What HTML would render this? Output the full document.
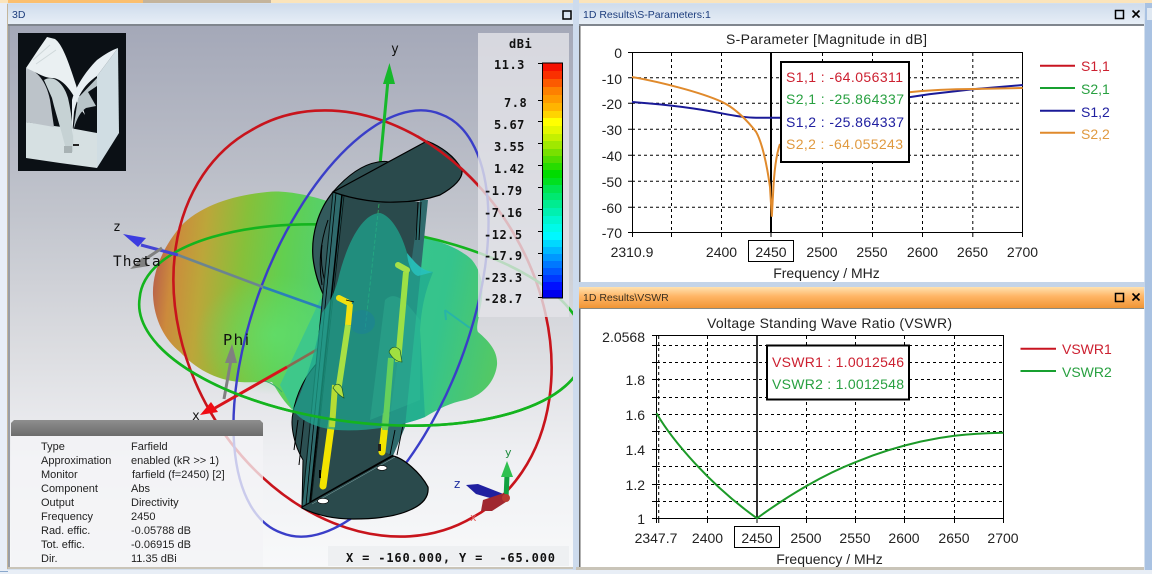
<!DOCTYPE html>
<html><head><meta charset="utf-8"><title>CST results</title>
<style>
html,body{margin:0;padding:0;width:1152px;height:574px;overflow:hidden;background:#d4e0ee}
svg{display:block;position:absolute;left:0;top:0;overflow:hidden}
text{font-family:"Liberation Sans",sans-serif;fill:#222}
.ax{font-size:14px}
.cb{font-family:"DejaVu Sans Mono","Liberation Mono",monospace;font-size:12px;font-weight:bold;letter-spacing:.5px;fill:#111}
.inf{font-size:11px;fill:#222}
.h{font-size:10.5px;fill:#1d3d7d}
.grid{stroke:#000;stroke-width:1;stroke-dasharray:3 3;fill:none}
.frame{stroke:#000;stroke-width:1;fill:none}
</style></head><body>
<svg width="1152" height="574" viewBox="0 0 1152 574" xmlns="http://www.w3.org/2000/svg">
<defs>
<linearGradient id="bg3d" x1="0" y1="0" x2="0" y2="1"><stop offset="0" stop-color="#a4a8b8"/><stop offset=".35" stop-color="#c2c5cd"/><stop offset=".6" stop-color="#dcdde1"/><stop offset=".8" stop-color="#eff0f3"/><stop offset="1" stop-color="#f8f9fa"/></linearGradient>
<linearGradient id="hb" x1="0" y1="0" x2="0" y2="1"><stop offset="0" stop-color="#cfdcec"/><stop offset="1" stop-color="#e8eff7"/></linearGradient>
<linearGradient id="ho" x1="0" y1="0" x2="0" y2="1"><stop offset="0" stop-color="#ffe2b0"/><stop offset=".45" stop-color="#ffb565"/><stop offset="1" stop-color="#f09535"/></linearGradient>
<linearGradient id="lobe" gradientUnits="userSpaceOnUse" x1="153" y1="270" x2="335" y2="290"><stop offset="0" stop-color="#b8604a"/><stop offset=".1" stop-color="#cc8a3c"/><stop offset=".26" stop-color="#bca63a"/><stop offset=".48" stop-color="#86c03a"/><stop offset=".7" stop-color="#62cf50"/><stop offset="1" stop-color="#4fd078"/></linearGradient>
<linearGradient id="lobe2" gradientUnits="userSpaceOnUse" x1="300" y1="300" x2="497" y2="340"><stop offset="0" stop-color="#3fc88a"/><stop offset=".7" stop-color="#35c48c"/><stop offset="1" stop-color="#52c866"/></linearGradient>
<radialGradient id="hi"><stop offset="0" stop-color="#60e070" stop-opacity=".7"/><stop offset="1" stop-color="#60e070" stop-opacity="0"/></radialGradient>
<linearGradient id="gh" x1="0" y1="0" x2="0" y2="1"><stop offset="0" stop-color="#8e8e8e"/><stop offset="1" stop-color="#6c6c6c"/></linearGradient>
<clipPath id="c3"><rect x="10" y="26" width="563" height="541"/></clipPath>
<clipPath id="cFront"><rect x="130" y="345" width="445" height="90"/></clipPath>
<clipPath id="cRed"><rect x="418" y="130" width="62" height="70"/></clipPath>
</defs>

<!-- frame -->
<rect width="1152" height="574" fill="#d4e0ee"/>
<rect x="0" y="0" width="7" height="574" fill="#e8eef7"/>
<rect x="7" y="4" width="1" height="565" fill="#c4b69c"/>
<rect x="1145" y="0" width="7" height="574" fill="#a9c2e2"/>
<rect x="0" y="0" width="1152" height="3" fill="#fbe4bb"/>
<rect x="8" y="0" width="135" height="3" fill="#fbbf6f"/>
<rect x="143" y="0" width="128" height="3" fill="#c4b49c"/>
<rect x="0" y="570" width="1152" height="4" fill="#e8eef6"/>
<rect x="0" y="571" width="8" height="1" fill="#8aa8cc"/>

<!-- 3D panel -->
<rect x="8" y="4" width="565" height="21" fill="url(#hb)"/>
<rect x="8" y="24" width="565" height="2" fill="#80868e"/>
<rect x="8" y="26" width="2" height="542" fill="#9a9ea6"/>
<text x="12" y="18" class="h">3D</text>
<rect x="563" y="11" width="8" height="8" fill="none" stroke="#000" stroke-width="1.5"/>
<rect x="10" y="26" width="563" height="541" fill="url(#bg3d)"/>

<g clip-path="url(#c3)">
<!-- thumbnail -->
<rect x="18" y="33" width="108" height="138" fill="#0b1015"/>
<path d="M26,122 L54,126 L70,128 L86,131 L97,133 L97,168 L60,163 L26,158 Z" fill="#d6e0e2"/>
<path d="M26,68 C36,70 46,80 50,100 L54,127 L26,122 Z" fill="#bcc3c9"/>
<path d="M26,68 L38,50 L47,37 L55,39 C62,44 68,60 76,85 L85,115 L80,108 C72,90 62,78 52,78 C44,78 36,72 26,68 Z" fill="#eaf0f2"/>
<path d="M33,60 L50,45 M36,64 L56,50" stroke="#cfd8da" stroke-width="1" fill="none"/>
<path d="M44,80 C54,74 64,84 68,98 C72,115 74,135 73,152 L66,150 C62,132 56,115 52,98 Z" fill="#c6d2d4"/>
<path d="M97,76 L118,48 L119,133 L97,168 Z" fill="#d0dde3"/>
<path d="M72,100 C75,88 85,72 97,60 C105,54 112,50 118,48 L97,76 C88,82 78,92 74,112 L72,136 Z" fill="#e8eff3"/>
<path d="M78,98 L97,78 L97,86 L88,92 L96,106 L86,108 C80,112 76,120 73,132 Z" fill="#b8c4c8"/>
<rect x="73" y="144" width="6" height="2" fill="#222"/>
<rect x="64" y="146" width="8" height="7" fill="#a8b2b4"/>

<!-- pattern -->
<path d="M333,203 C310,195 285,190 267,192 C235,195 200,205 180,227 C165,245 152,270 153,295 C154,320 165,340 180,352 C195,368 215,380 240,382 C255,383 265,381 272,382 C278,392 285,404 294,411 L340,411 L340,203 Z" fill="url(#lobe)"/>
<ellipse cx="275" cy="335" rx="80" ry="60" fill="url(#hi)"/>
<path d="M427,238 C445,243 462,250 472,260 C482,272 485,290 480,310 C478,322 476,328 478,332 C490,342 498,352 497,365 C495,382 482,396 465,400 C450,403 440,408 425,417 C405,425 370,432 337,430 C315,428 300,420 293,410 L280,385 L320,300 L400,220 Z" fill="url(#lobe2)"/>
<path d="M262,381 C268,381 275,385 282,392" stroke="#3ab070" stroke-width="1" fill="none"/>

<!-- rings -->
<path d="M251.7,130 A223 173.5 60.2 1 1 473.3,517 A223 173.5 60.2 1 1 251.7,130 Z" fill="none" stroke="#c8141c" stroke-width="2.6"/>
<path d="M281.5,532.9 A224 105 -69.2 1 1 440.5,114.1 A224 105 -69.2 1 1 281.5,532.9 Z" fill="none" stroke="#3a3ec8" stroke-width="2.4"/>
<path d="M139.7,297.7 A224 96 7 1 1 584.3,352.3 A224 96 7 1 1 139.7,297.7 Z" fill="none" stroke="#14b41e" stroke-width="2.6"/>

<!-- axes -->
<line x1="379.5" y1="170" x2="388" y2="80" stroke="#16b82a" stroke-width="3"/>
<polygon points="389.5,63 383,84 395,84" fill="#16b82a"/>
<text x="391" y="53" style="font-family:'DejaVu Sans Mono',monospace;font-size:13px;fill:#111">y</text>
<path d="M141,245 L178,255" stroke="#4444d4" stroke-width="3"/>
<path d="M178,255 L263,287" stroke="#6c8490" stroke-width="2.6"/>
<path d="M263,287 L322,308" stroke="#2a80b8" stroke-width="2.6"/>
<polygon points="123,234 146,238 138,247" fill="#3c3ce0"/>
<text x="113" y="231" style="font-family:'DejaVu Sans Mono',monospace;font-size:13px;fill:#111">z</text>
<line x1="162" y1="248" x2="138" y2="264" stroke="#808080" stroke-width="3"/>
<polygon points="130,269 143,257 149,266" fill="#808080"/>
<text x="113" y="266" style="font-family:'DejaVu Sans Mono',monospace;font-size:14.5px;letter-spacing:1px;fill:#111">Theta</text>
<text x="223" y="345" textLength="26" style="font-family:'DejaVu Sans',sans-serif;font-size:15px;fill:#111">Phi</text>
<line x1="224" y1="399" x2="231" y2="360" stroke="#808080" stroke-width="3"/>
<polygon points="232,344 225,363 237,363" fill="#808080"/>
<line x1="318" y1="349" x2="287" y2="367" stroke="#8a6a50" stroke-width="2.6"/>
<line x1="287" y1="367" x2="215" y2="408" stroke="#d8141c" stroke-width="3"/>
<polygon points="211,402 200,415 218,412" fill="#f00c14"/>
<text x="192" y="420" style="font-family:'DejaVu Sans Mono',monospace;font-size:13px;fill:#111">x</text>

<!-- antenna back -->
<path d="M333,192 C318,210 311,235 313,258 C315,275 320,288 325,298 L342,240 Z" fill="#335a5c" stroke="#000" stroke-width="1.2"/>
<path d="M320,360 C305,375 296,395 293,413 C290,425 294,445 303,460 L302,507 L330,420 Z" fill="#2c5052" stroke="#000" stroke-width="1"/>
<path d="M333,192 C345,178 360,165 378,162 C390,160 398,164 385,172 Z" fill="#2f5052" stroke="#000" stroke-width="1"/>
<path d="M322,245 C320,262 323,278 328,290 M328,220 C321,240 318,262 322,285" stroke="#000" stroke-width="1" fill="none"/>
<path d="M298,420 L294,450 M304,420 L299,465" stroke="#000" stroke-width="1" fill="none"/>

<!-- plate -->
<polygon points="342,195 420,202 393,456 310,502" fill="#2a4a4c"/>
<polygon points="333,192 344,195 311,503 302,507" fill="#2f6a6c" stroke="#0a1a1a" stroke-width="1"/>
<polygon points="420,200 428,200 405,427 393,456 385,452" fill="#2f6a6c"/>
<line x1="342" y1="195" x2="310" y2="502" stroke="#000" stroke-width="1.6"/>
<line x1="336" y1="193" x2="306" y2="505" stroke="#000" stroke-width=".8"/>
<path d="M418,202 L416,240 M421,202 L419,240" stroke="#000" stroke-width=".9"/>
<path d="M395,430 L390,455 M403,425 L397,455" stroke="#000" stroke-width=".9"/>

<!-- top disc -->
<path d="M333,192 L427,141 C440,146 455,156 462,170 C463,178 456,186 440,195 C425,200 410,202 397,202 C380,203 355,200 333,192 Z" fill="#2a4a4c" stroke="#000" stroke-width="1.2"/>
<line x1="379" y1="204" x2="365" y2="330" stroke="#30b060" stroke-width=".8" stroke-dasharray="4 2"/>

<!-- bottom disc -->
<path d="M302,507 L393,456 C403,458 420,472 428,487 C429,496 424,504 410,510 C395,517 375,519 353,519 C335,519 318,516 302,508 Z" fill="#2a4a4c" stroke="#000" stroke-width="1.2"/>
<line x1="310" y1="502" x2="393" y2="455" stroke="#000" stroke-width="1"/>
<line x1="312" y1="504" x2="395" y2="457" stroke="#8aa" stroke-width=".5"/>
<ellipse cx="323" cy="501" rx="5.5" ry="2.6" fill="#fff" stroke="#000" stroke-width=".6"/>
<ellipse cx="382" cy="468" rx="5" ry="2.4" fill="#fff" stroke="#000" stroke-width=".6"/>

<!-- lower yellow rods -->
<line x1="323" y1="486" x2="332" y2="420" stroke="#f2e400" stroke-width="7" stroke-linecap="round"/>
<line x1="382" y1="452" x2="386" y2="415" stroke="#f2e400" stroke-width="7" stroke-linecap="round"/>
<rect x="319" y="470" width="2" height="8" fill="#000"/>
<rect x="378" y="444" width="3" height="7" fill="#222"/>

<!-- translucent lobe over antenna -->
<path d="M380,213 C362,213 346,245 338,280 C334,295 328,305 322,313 C318,345 305,385 293,410 C300,420 315,428 337,430 C370,432 405,425 425,417 L420,330 C422,300 428,285 433,272 L423,270 C415,262 410,258 407,253 C402,235 392,216 380,213 Z" fill="#1fa890" fill-opacity=".72"/>
<path d="M385,300 C395,290 405,300 420,320 L420,400 L370,420 Z" fill="#34c09a" fill-opacity=".3"/>
<ellipse cx="362" cy="322" rx="13" ry="12" fill="#1a7fa0" fill-opacity=".45"/>
<path d="M407,253 C415,262 420,270 433,272 L418,276 C412,274 408,265 407,253 Z" fill="#28c4c0" fill-opacity=".8"/>
<path d="M445,310 L470,328 M445,310 L446,320" stroke="#28b4a8" stroke-width="2" fill="none"/>

<!-- upper rods -->
<line x1="332" y1="427" x2="335" y2="385" stroke="#b6dc34" stroke-width="6"/>
<line x1="338" y1="392" x2="348" y2="325" stroke="#a8e044" stroke-width="6"/>
<path d="M333,388 C336,392 340,396 344,398 L342,388 C340,384 336,382 333,388 Z" fill="#b4e040" stroke="#1a5a30" stroke-width=".7"/>
<line x1="348" y1="325" x2="350" y2="304" stroke="#f2e010" stroke-width="6"/>
<path d="M339,298 L349,303" stroke="#f2e010" stroke-width="6" stroke-linecap="round"/>
<line x1="346" y1="300" x2="354" y2="302" stroke="#000" stroke-width=".7"/>
<line x1="385" y1="430" x2="391" y2="358" stroke="#66d05c" stroke-width="6"/>
<line x1="398" y1="362" x2="406" y2="272" stroke="#9ce046" stroke-width="6"/>
<path d="M389,352 C392,358 397,362 402,362 L400,350 C396,346 391,346 389,352 Z" fill="#a0e040" stroke="#1a5a30" stroke-width=".7"/>
<path d="M398,265 L407,270" stroke="#a6e048" stroke-width="6" stroke-linecap="round"/>

<!-- front ring parts -->
<g clip-path="url(#cFront)"><path d="M139.7,297.7 A224 96 7 1 1 584.3,352.3 A224 96 7 1 1 139.7,297.7 Z" fill="none" stroke="#14b41e" stroke-width="2.6"/></g>
<g clip-path="url(#cRed)"><path d="M251.7,130 A223 173.5 60.2 1 1 473.3,517 A223 173.5 60.2 1 1 251.7,130 Z" fill="none" stroke="#c8141c" stroke-width="2.6"/></g>

<!-- small triad -->
<line x1="506" y1="499" x2="507" y2="475" stroke="#12a040" stroke-width="5"/>
<polygon points="507,461 501,477 513,477" fill="#30c050"/>
<polygon points="466,485 478,484 506,495 504,502 476,494" fill="#2020a0"/>
<polygon points="481,511 483,500 504,493 509,500 492,511" fill="#a02830"/>
<circle cx="506" cy="498" r="4" fill="#b83a30"/>
<text x="505" y="456" style="font-family:'DejaVu Sans',sans-serif;font-size:11px;fill:#1c8a3c">y</text>
<text x="454" y="488" style="font-family:'DejaVu Sans',sans-serif;font-size:12px;fill:#2030a0">z</text>
<text x="470" y="521" style="font-family:'DejaVu Sans',sans-serif;font-size:11px;fill:#e06060">x</text>
</g>

<!-- colorbar panel -->
<rect x="478" y="33" width="91" height="284" fill="#e4e4e8" fill-opacity=".8"/>
<g>
<rect x="543" y="63" width="19" height="8" fill="#f51000"/><rect x="543" y="71" width="19" height="8" fill="#fa3000"/><rect x="543" y="79" width="19" height="8" fill="#fc5a00"/><rect x="543" y="87" width="19" height="8" fill="#fd8000"/><rect x="543" y="95" width="19" height="8" fill="#fe9a00"/><rect x="543" y="103" width="19" height="8" fill="#ffb400"/><rect x="543" y="111" width="19" height="7" fill="#ffd400"/><rect x="543" y="118" width="19" height="8" fill="#ffff00"/><rect x="543" y="126" width="19" height="8" fill="#e4f800"/><rect x="543" y="134" width="19" height="7" fill="#c4f000"/><rect x="543" y="141" width="19" height="8" fill="#a0e800"/><rect x="543" y="149" width="19" height="7" fill="#78e000"/><rect x="543" y="156" width="19" height="7" fill="#50dc00"/><rect x="543" y="163" width="19" height="7" fill="#28dc00"/><rect x="543" y="170" width="19" height="8" fill="#00dc00"/><rect x="543" y="178" width="19" height="7" fill="#00e020"/><rect x="543" y="185" width="19" height="8" fill="#00e450"/><rect x="543" y="193" width="19" height="7" fill="#00e870"/><rect x="543" y="200" width="19" height="8" fill="#00ec90"/><rect x="543" y="208" width="19" height="8" fill="#00f0b0"/><rect x="543" y="216" width="19" height="8" fill="#00f6d0"/><rect x="543" y="224" width="19" height="8" fill="#00fae8"/><rect x="543" y="232" width="19" height="8" fill="#00f8ff"/><rect x="543" y="240" width="19" height="7" fill="#00d8ff"/><rect x="543" y="247" width="19" height="7" fill="#00b8ff"/><rect x="543" y="254" width="19" height="7" fill="#0098ff"/><rect x="543" y="261" width="19" height="7" fill="#0078ff"/><rect x="543" y="268" width="19" height="7" fill="#0058ff"/><rect x="543" y="275" width="19" height="7" fill="#0038ff"/><rect x="543" y="282" width="19" height="8" fill="#0010ff"/><rect x="543" y="290" width="19" height="8" fill="#0000ee"/>
</g>
<rect x="542.5" y="63" width="20" height="235" fill="none" stroke="#000" stroke-width="1"/>
<path d="M538,63.5h5M538,100.5h5M538,121.5h5M538,143.5h5M538,165.5h5M538,187.5h5M538,209.5h5M538,231.5h5M538,253.5h5M538,275.5h5M538,297.5h5" stroke="#000" stroke-width="1"/>
<text x="509" y="48" class="cb">dBi</text>
<text x="494" y="69" class="cb">11.3</text>
<text x="504" y="107" class="cb">7.8</text>
<text x="494" y="129" class="cb">5.67</text>
<text x="494" y="151" class="cb">3.55</text>
<text x="494" y="173" class="cb">1.42</text>
<text x="484" y="195" class="cb">-1.79</text>
<text x="484" y="217" class="cb">-7.16</text>
<text x="484" y="239" class="cb">-12.5</text>
<text x="484" y="260" class="cb">-17.9</text>
<text x="484" y="282" class="cb">-23.3</text>
<text x="484" y="303" class="cb">-28.7</text>

<!-- info panel -->
<rect x="11" y="436" width="252" height="131" fill="#f4f4f6" fill-opacity=".78"/>
<path d="M11,436 V423 L14,420 H260 L263,423 V436 Z" fill="url(#gh)"/>
<text x="41" y="450" class="inf">Type</text><text x="131" y="450" class="inf">Farfield</text>
<text x="41" y="464" class="inf">Approximation</text><text x="131" y="464" class="inf">enabled (kR &gt;&gt; 1)</text>
<text x="41" y="478" class="inf">Monitor</text><text x="132" y="478" class="inf">farfield (f=2450) [2]</text>
<text x="41" y="492" class="inf">Component</text><text x="131" y="492" class="inf">Abs</text>
<text x="41" y="506" class="inf">Output</text><text x="131" y="506" class="inf">Directivity</text>
<text x="41" y="520" class="inf">Frequency</text><text x="131" y="520" class="inf">2450</text>
<text x="41" y="534" class="inf">Rad. effic.</text><text x="131" y="534" class="inf">-0.05788 dB</text>
<text x="41" y="548" class="inf">Tot. effic.</text><text x="131" y="548" class="inf">-0.06915 dB</text>
<text x="41" y="562" class="inf">Dir.</text><text x="131" y="562" class="inf">11.35 dBi</text>
<rect x="328" y="546" width="241" height="20" fill="#eef0f2"/>
<text x="346" y="562" xml:space="preserve" textLength="209" style="font-family:'DejaVu Sans Mono','Liberation Mono',monospace;font-size:12px;font-weight:bold;white-space:pre;fill:#111">X = -160.000, Y =  -65.000</text>
<rect x="8" y="567" width="565" height="2" fill="#c9c4b8"/>

<!-- S-parameter panel -->
<rect x="573" y="0" width="6" height="287" fill="#cddbed"/>
<rect x="579" y="4" width="565" height="21" fill="url(#hb)"/>
<rect x="579" y="24" width="565" height="2" fill="#80868e"/>
<rect x="580" y="26" width="564" height="256" fill="#fff"/>
<rect x="579" y="26" width="1.5" height="256" fill="#666"/>
<text x="583" y="18" class="h">1D Results\S-Parameters:1</text>
<rect x="1115.5" y="10.5" width="8" height="8" fill="none" stroke="#000" stroke-width="1.5"/>
<path d="M1132.5,10.5l7,7M1139.5,10.5l-7,7" stroke="#000" stroke-width="1.6"/>
<rect x="1147" y="8" width="5" height="12" fill="#dfe8f2"/>

<text x="826.5" y="44" text-anchor="middle" textLength="201" class="ax">S-Parameter [Magnitude in dB]</text>
<path class="grid" d="M632,77.7H1022M632,103.3H1022M632,129.3H1022M632,155.3H1022M632,181.3H1022M632,207.3H1022M671.5,53V232M721.5,53V232M822.5,53V232M872.5,53V232M922.5,53V232M972.8,53V232"/>
<rect x="632.5" y="52.5" width="390" height="180" class="frame"/>
<path d="M628,52.5h4M628,77.7h4M628,103.3h4M628,129.3h4M628,155.3h4M628,181.3h4M628,207.3h4M628,232.5h4M632.5,233v4M671.5,233v4M721.5,233v4M771,233v4M822.5,233v4M872.5,233v4M922.5,233v4M972.8,233v4M1022.5,233v4" stroke="#000" stroke-width="1"/>
<line x1="771" y1="52" x2="771" y2="233" stroke="#000" stroke-width="2"/>
<path d="M632,102 C660,104 695,108 721.5,113.3 C735,116 745,117.7 756,117.7 L782,117.7 M909,97.3 L929,94.3 L972.8,89.3 L1022.7,85" fill="none" stroke="#1a1a98" stroke-width="2"/>
<path d="M632,77 C660,82 700,92 721.5,101.7 C735,108 746,119 756,131.7 C762,142 767,165 770,187 L771.8,216.7 L773,195 C774,172 776,155 780,144 M909,92.3 C930,90 950,89 972.8,89 L1022.7,88" fill="none" stroke="#e08a2c" stroke-width="2"/>
<rect x="781" y="62" width="128" height="100" fill="#fff" stroke="#000" stroke-width="2"/>
<text x="786" y="82" style="fill:#cc2030" class="ax" textLength="117">S1,1 : -64.056311</text>
<text x="786" y="104" style="fill:#28a040" class="ax" textLength="118">S2,1 : -25.864337</text>
<text x="786" y="127" style="fill:#2020a0" class="ax" textLength="118">S1,2 : -25.864337</text>
<text x="786" y="149" style="fill:#e09a40" class="ax" textLength="117">S2,2 : -64.055243</text>
<g text-anchor="end">
<text x="622" y="58" class="ax">0</text><text x="622" y="84" class="ax">-10</text><text x="622" y="109" class="ax">-20</text><text x="622" y="135" class="ax">-30</text><text x="622" y="161" class="ax">-40</text><text x="622" y="187" class="ax">-50</text><text x="622" y="213" class="ax">-60</text><text x="622" y="238" class="ax">-70</text>
</g>
<g text-anchor="middle">
<text x="632" y="257" class="ax">2310.9</text><text x="721.5" y="257" class="ax">2400</text><text x="771" y="257" class="ax">2450</text><text x="822" y="257" class="ax">2500</text><text x="872" y="257" class="ax">2550</text><text x="922.5" y="257" class="ax">2600</text><text x="972.5" y="257" class="ax">2650</text><text x="1022.5" y="257" class="ax">2700</text>
<text x="826.5" y="278" class="ax">Frequency / MHz</text>
</g>
<rect x="748.5" y="240.5" width="45" height="21" class="frame"/>
<path d="M1040,65.7H1075" stroke="#c81420" stroke-width="2"/><path d="M1040,88H1075" stroke="#18a030" stroke-width="2"/><path d="M1040,110.7H1075" stroke="#1a1a98" stroke-width="2"/><path d="M1040,132.7H1075" stroke="#e08a2c" stroke-width="2"/>
<text x="1081" y="71" class="ax" style="fill:#cc2030">S1,1</text>
<text x="1081" y="94" class="ax" style="fill:#28a040">S2,1</text>
<text x="1081" y="117" class="ax" style="fill:#2020a0">S1,2</text>
<text x="1081" y="139" class="ax" style="fill:#e09a40">S2,2</text>

<!-- VSWR panel -->
<rect x="579" y="282" width="566" height="5" fill="#c4d4e8"/>
<rect x="573" y="287" width="6" height="283" fill="#cddbed"/>
<rect x="579" y="287" width="565" height="21" fill="url(#ho)"/>
<rect x="579" y="308" width="565" height="1.5" fill="#8a8a80"/>
<rect x="580" y="309" width="564" height="258" fill="#fff"/>
<rect x="579" y="309" width="1.5" height="258" fill="#666"/>
<rect x="576" y="567" width="568" height="3" fill="#c9c4b8"/>
<text x="583" y="301" style="font-size:10.5px;fill:#3a3020">1D Results\VSWR</text>
<rect x="1115.5" y="293.5" width="8" height="8" fill="none" stroke="#000" stroke-width="1.5"/>
<path d="M1132.5,293.5l7,7M1139.5,293.5l-7,7" stroke="#000" stroke-width="1.6"/>

<text x="829.5" y="328" text-anchor="middle" textLength="245" class="ax">Voltage Standing Wave Ratio (VSWR)</text>
<path class="grid" d="M657,345.5H1003M657,362.5H1003M657,379.5H1003M657,397.5H1003M657,414.5H1003M657,431.5H1003M657,449.5H1003M657,466.5H1003M657,484.5H1003M657,501.5H1003M658.7,336V518M707.5,336V518M806.5,336V518M855.5,336V518M904.5,336V518M954.5,336V518"/>
<rect x="656.5" y="335.5" width="347" height="183" class="frame"/>
<path d="M652,335.5h4M652,345.5h4M652,362.5h4M652,379.5h4M652,397.5h4M652,414.5h4M652,431.5h4M652,449.5h4M652,466.5h4M652,484.5h4M652,501.5h4M652,518.5h4M656.5,519v4M658.7,519v4M707.5,519v4M757,519v4M806.5,519v4M855.5,519v4M904.5,519v4M954.5,519v4M1003.5,519v4" stroke="#000" stroke-width="1"/>
<line x1="757" y1="336" x2="757" y2="519" stroke="#000" stroke-width="1.6"/>
<path d="M656.5,413.3 C672,440 710,485 757,518.3 C790,494 825,474 855.2,462.3 C885,450 920,440 954.4,435.7 C970,434 990,433 1003.3,432.7" fill="none" stroke="#1c9a28" stroke-width="2"/>
<rect x="767" y="345.5" width="142" height="54" fill="#fff" stroke="#000" stroke-width="2"/>
<text x="772" y="367" class="ax" style="fill:#cc2030" textLength="132">VSWR1 : 1.0012546</text>
<text x="772" y="389" class="ax" style="fill:#28a040" textLength="132">VSWR2 : 1.0012548</text>
<g text-anchor="end">
<text x="645" y="342" class="ax">2.0568</text><text x="645" y="385" class="ax">1.8</text><text x="645" y="420" class="ax">1.6</text><text x="645" y="455" class="ax">1.4</text><text x="645" y="490" class="ax">1.2</text><text x="645" y="524" class="ax">1</text>
</g>
<g text-anchor="middle">
<text x="656" y="543" class="ax">2347.7</text><text x="707.5" y="543" class="ax">2400</text><text x="757" y="543" class="ax">2450</text><text x="806" y="543" class="ax">2500</text><text x="855" y="543" class="ax">2550</text><text x="904" y="543" class="ax">2600</text><text x="954" y="543" class="ax">2650</text><text x="1003" y="543" class="ax">2700</text>
<text x="829.5" y="564" class="ax">Frequency / MHz</text>
</g>
<rect x="734.5" y="526.5" width="45" height="21" class="frame"/>
<path d="M1020.5,348.7H1056" stroke="#c81420" stroke-width="2"/><path d="M1020.5,371H1056" stroke="#18a030" stroke-width="2"/>
<text x="1062" y="354" class="ax" style="fill:#cc2030">VSWR1</text>
<text x="1062" y="377" class="ax" style="fill:#28a040">VSWR2</text>
</svg>
</body></html>
